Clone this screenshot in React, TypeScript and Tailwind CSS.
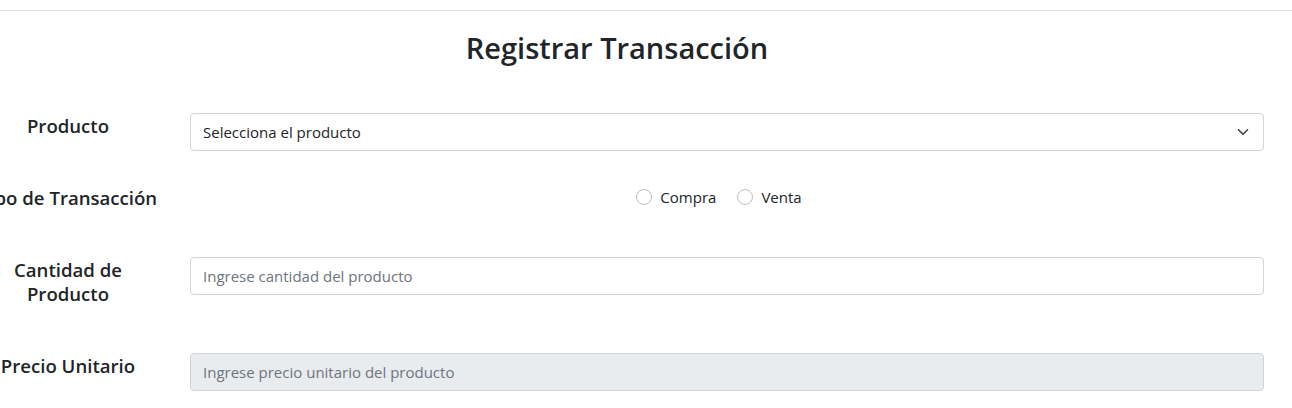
import React from 'react';

const labelCls =
  "w-[136px] shrink-0 flex justify-center text-[18.6px] leading-[24px] font-semibold text-[#212529]";

const inputCls =
  "w-[1074px] h-[38px] rounded-[4px] border border-[#ced4da] px-[12px] text-[15px] text-[#212529] placeholder:text-[#6c757d] outline-none";

export default function App() {
  return (
    <div className="w-full h-[408px] overflow-hidden bg-white font-['Open_Sans','Noto_Sans',sans-serif]">
      <div className="mt-[10px] border-t border-[#dee2e6]" />

      <div className="mt-[19px] flex justify-center pr-[58px]">
        <h2 className="text-[29px] leading-[36px] font-semibold text-[#212529]">
          Registrar Transacción
        </h2>
      </div>

      <form className="mt-[47px] flex flex-col">
        {/* producto */}
        <div className="flex items-start gap-[54px] mb-[34px]">
          <div className={labelCls + " mt-[1px]"}>
            <span className="whitespace-nowrap">Producto</span>
          </div>
          <div className="relative w-[1074px] h-[38px] rounded-[4px] border border-[#ced4da] px-[12px] flex items-center text-[15px] text-[#212529]">
            Selecciona el producto
            <svg
              className="absolute right-[12px] top-1/2 -translate-y-1/2"
              width="16"
              height="12"
              viewBox="0 0 16 16"
              fill="none"
              stroke="#343a40"
              strokeWidth="2"
              strokeLinecap="round"
              strokeLinejoin="round"
            >
              <path d="m2 5 6 6 6-6" />
            </svg>
          </div>
        </div>

        {/* tipo */}
        <div className="flex items-start gap-[54px] mb-[47px]">
          <div className={labelCls + " mt-[1px]"}>
            <span className="whitespace-nowrap">Tipo de Transacción</span>
          </div>
          <div className="w-[1074px] h-[24px] flex items-center justify-center gap-[21px] text-[15px] text-[#212529]">
            <label className="flex items-center gap-[8px]">
              <span className="w-[16px] h-[16px] rounded-full border border-[#bfbfbf] bg-white" />
              Compra
            </label>
            <label className="flex items-center gap-[8px] mr-[16px]">
              <span className="w-[16px] h-[16px] rounded-full border border-[#bfbfbf] bg-white" />
              Venta
            </label>
          </div>
        </div>

        {/* cantidad */}
        <div className="flex items-start gap-[54px] mb-[47px]">
          <div className={labelCls + " mt-[1px] text-center"}>
            <span className="w-[112px]">Cantidad de Producto</span>
          </div>
          <input className={inputCls} placeholder="Ingrese cantidad del producto" />
        </div>

        {/* precio */}
        <div className="flex items-start gap-[54px]">
          <div className={labelCls + " mt-[1px]"}>
            <span className="whitespace-nowrap">Precio Unitario</span>
          </div>
          <input
            className={inputCls + " bg-[#e9ecef]"}
            placeholder="Ingrese precio unitario del producto"
            disabled
          />
        </div>
      </form>
    </div>
  );
}
